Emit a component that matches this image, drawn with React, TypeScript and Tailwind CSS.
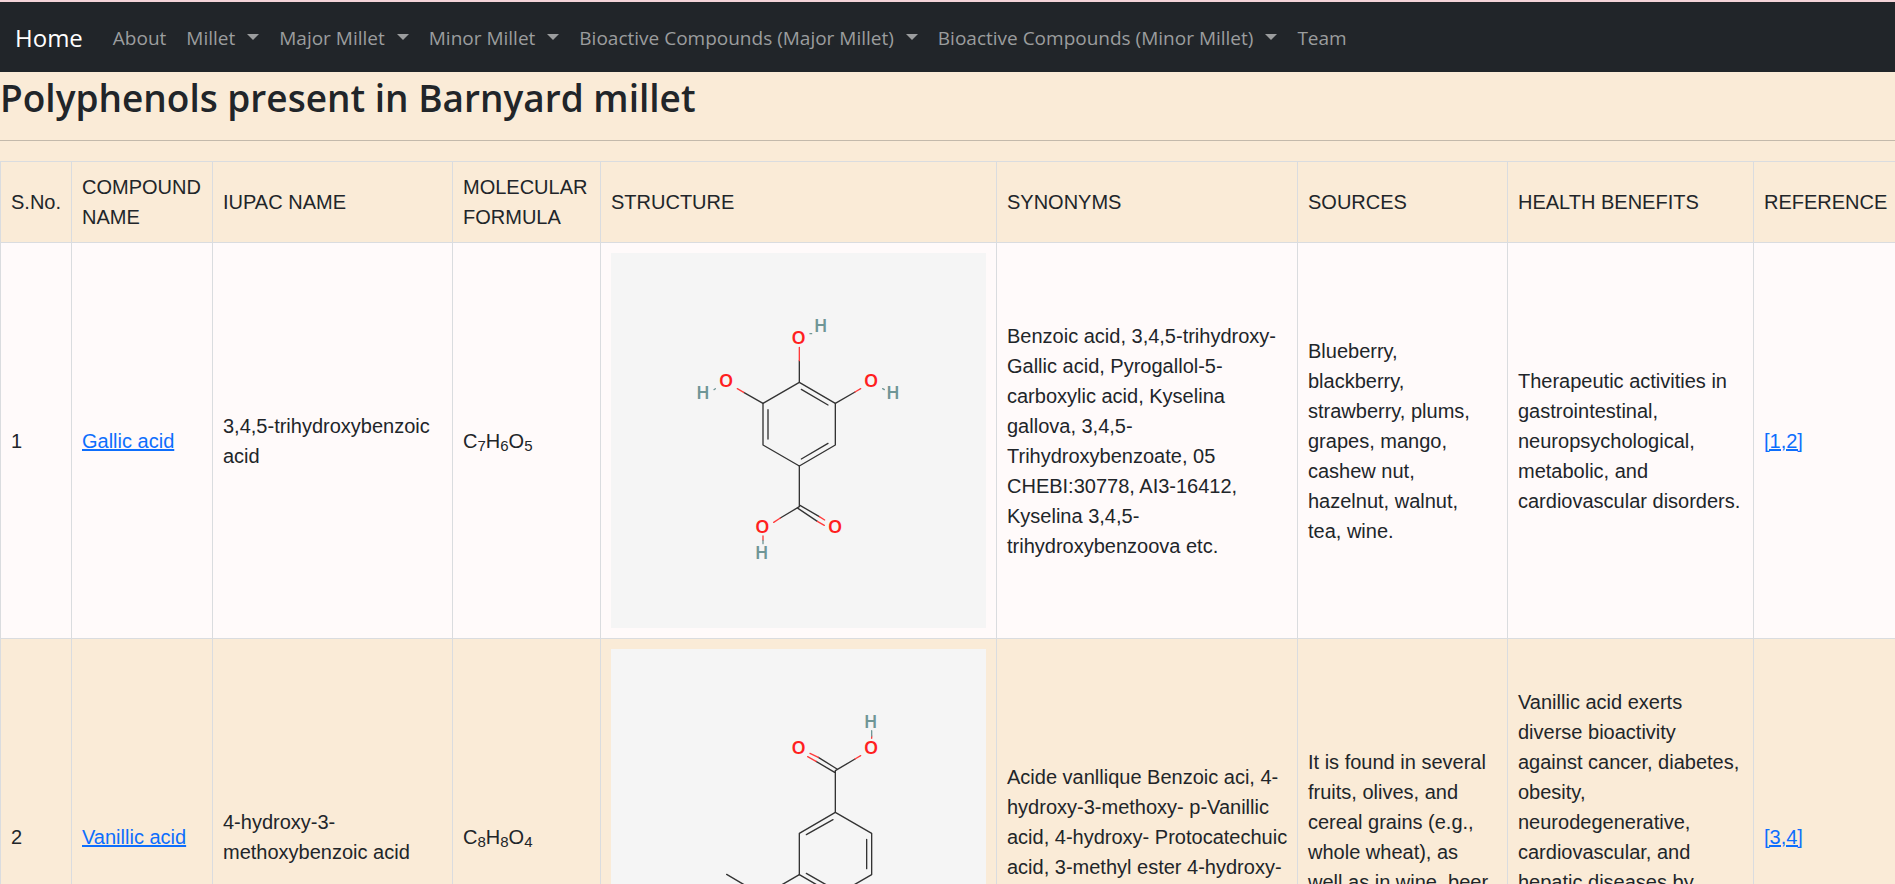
import type { ReactNode } from "react";

const navItems = [
  { label: "About", menu: false },
  { label: "Millet", menu: true },
  { label: "Major Millet", menu: true },
  { label: "Minor Millet", menu: true },
  { label: "Bioactive Compounds (Major Millet)", menu: true },
  { label: "Bioactive Compounds (Minor Millet)", menu: true },
  { label: "Team", menu: false },
];

const CARBON = "#333333";
const OXYGEN = "#ff3b3b";
const HYDROGEN = "#6f9696";

function Bond({ d, color = CARBON }: { d: string; color?: string }) {
  return <path d={d} fill="none" stroke={color} strokeWidth={4} strokeLinecap="round" strokeLinejoin="round" />;
}

function Atom({ x, y, symbol }: { x: number; y: number; symbol: "O" | "H" }) {
  return (
    <text
      x={x}
      y={y}
      textAnchor="middle"
      fontSize={symbol === "O" ? 54 : 53}
      fontWeight={600}
      fill={symbol === "O" ? "#ff1f1f" : HYDROGEN}
      className="font-['Noto_Sans',sans-serif]"
    >
      {symbol}
    </text>
  );
}

function GallicAcid() {
  return (
    <svg viewBox="33 39 1125 1125" role="img" aria-label="Gallic acid structure" className="block size-[375px] bg-[#f5f5f5]">
      <Bond d="M598 427 L706 490 V615 L598 678 L489 615 V490 Z" />
      <Bond d="M604 448 L684 495 M684 610 L604 657 M504 509 V597" />
      <Bond d="M598 427 V362 M489 490 L431 457 M706 490 L765 456" />
      <Bond d="M598 678 V800 L541 834 M600 796 L658 830 M594 805 L652 844" />
      <Bond color={OXYGEN} d="M598 362 V322 M431 457 L412 446 M765 456 L782 446" />
      <Bond color={OXYGEN} d="M541 834 L521 847 M658 830 L674 840 M652 844 L673 856 M489 888 V901" />
      <Bond color={HYDROGEN} d="M489 901 V911 M630 281 H635 M342 449 L346 446 M848 446 L853 449" />
      <Atom x={596} y={313} symbol="O" />
      <Atom x={662} y={276} symbol="H" />
      <Atom x={378} y={440} symbol="O" />
      <Atom x={309} y={478} symbol="H" />
      <Atom x={813} y={440} symbol="O" />
      <Atom x={879} y={478} symbol="H" />
      <Atom x={487} y={879} symbol="O" />
      <Atom x={485} y={958} symbol="H" />
      <Atom x={705} y={879} symbol="O" />
    </svg>
  );
}

function VanillicAcid() {
  return (
    <svg viewBox="33 57 1125 1125" role="img" aria-label="Vanillic acid structure" className="block size-[375px] bg-[#f5f5f5]">
      <Bond d="M706 547 L815 610 V734 L706 797 L598 734 V610 Z" />
      <Bond d="M699 569 L619 614 M800 628 V716 M619 730 L699 776" />
      <Bond d="M706 547 V422 L765 387 M711 417 L655 382 M704 427 L648 394" />
      <Bond d="M598 734 L541 767 M380 733 L437 767 M706 797 V862" />
      <Bond color={OXYGEN} d="M765 387 L782 377 M655 382 L630 370 M648 394 L623 380 M815 325 V318" />
      <Bond color={OXYGEN} d="M541 767 L522 778 M437 767 L456 778 M706 862 V900" />
      <Bond color={HYDROGEN} d="M815 318 V302 M670 940 L674 938" />
      <Atom x={812} y={293} symbol="H" />
      <Atom x={813} y={372} symbol="O" />
      <Atom x={596} y={372} symbol="O" />
      <Atom x={487} y={816} symbol="O" />
      <Atom x={705} y={941} symbol="O" />
      <Atom x={640} y={980} symbol="H" />
    </svg>
  );
}

type Compound = {
  name: string;
  iupac: string;
  formula: [string, number][];
  structure: ReactNode;
  synonyms: string;
  sources: string;
  benefits: string;
  reference: string;
};

const compounds: Compound[] = [
  {
    name: "Gallic acid",
    iupac: "3,4,5-trihydroxybenzoic acid",
    formula: [["C", 7], ["H", 6], ["O", 5]],
    structure: <GallicAcid />,
    synonyms:
      "Benzoic acid, 3,4,5-trihydroxy- Gallic acid, Pyrogallol-5-carboxylic acid, Kyselina gallova, 3,4,5-Trihydroxybenzoate, 05 CHEBI:30778, AI3-16412, Kyselina 3,4,5-trihydroxybenzoova etc.",
    sources: "Blueberry, blackberry, strawberry, plums, grapes, mango, cashew nut, hazelnut, walnut, tea,\u00a0wine.",
    benefits: "Therapeutic activities in gastrointestinal, neuropsychological, metabolic, and cardiovascular disorders.",
    reference: "[1,2]",
  },
  {
    name: "Vanillic acid",
    iupac: "4-hydroxy-3-methoxybenzoic acid",
    formula: [["C", 8], ["H", 8], ["O", 4]],
    structure: <VanillicAcid />,
    synonyms:
      "Acide vanllique Benzoic aci, 4-hydroxy-3-methoxy- p-Vanillic acid, 4-hydroxy- Protocatechuic acid, 3-methyl ester 4-hydroxy-m-anisic acid etc.",
    sources:
      "It is found in several fruits, olives, and cereal grains (e.g., whole wheat), as well\u00a0as\u00a0in wine, beer and cider.",
    benefits:
      "Vanillic acid exerts diverse bioactivity against cancer, diabetes, obesity, neurodegenerative, cardiovascular, and hepatic diseases by inhibiting the associated cell signaling and molecular pathways.",
    reference: "[3,4]",
  },
];

const headings = [
  "S.No.",
  "COMPOUND NAME",
  "IUPAC NAME",
  "MOLECULAR FORMULA",
  "STRUCTURE",
  "SYNONYMS",
  "SOURCES",
  "HEALTH BENEFITS",
  "REFERENCE",
];

const cell = "border border-[#dadcdf] py-[10px] pr-2 pl-[10px] text-left align-middle font-normal last:border-r-0";
const link = "text-[#0d6efd] underline";

function NavBar() {
  return (
    <nav className="flex h-[70px] items-center bg-[#212529] px-[15px] pt-[2px] font-['Open_Sans','Noto_Sans',sans-serif] text-[19px] whitespace-nowrap text-[#9b9d9e]">
      <a href="#home" className="mr-5 text-2xl text-white">
        Home
      </a>
      <ul className="flex items-center">
        {navItems.map((item) => (
          <li key={item.label}>
            {item.menu ? (
              <button type="button" className="flex items-center gap-3 px-[10px]">
                {item.label}
                <svg viewBox="0 0 12 6" className="mb-[2px] h-[6px] w-3" aria-hidden="true">
                  <path d="M0 0H12L6 6Z" fill="currentColor" />
                </svg>
              </button>
            ) : (
              <a href={"#" + item.label.toLowerCase()} className="px-[10px]">
                {item.label}
              </a>
            )}
          </li>
        ))}
      </ul>
    </nav>
  );
}

export default function App() {
  return (
    <div className="min-h-screen overflow-x-hidden border-t-2 border-[#f3d3d8] bg-[#faebd7] text-[#212529]">
      <NavBar />
      <h1 className="font-['Open_Sans','Noto_Sans',sans-serif] text-[37px] leading-[52px] font-semibold">
        Polyphenols present in Barnyard millet
      </h1>
      <hr className="mt-4 mb-5 border-t border-[#212529]/25" />
      <table className="w-full table-fixed border-collapse font-['Liberation_Sans',Arial,sans-serif] text-xl leading-[30px]">
        <colgroup>
          <col className="w-[71px]" />
          <col className="w-[141px]" />
          <col className="w-[240px]" />
          <col className="w-[148px]" />
          <col className="w-[396px]" />
          <col className="w-[301px]" />
          <col className="w-[210px]" />
          <col className="w-[246px]" />
          <col />
        </colgroup>
        <thead>
          <tr>
            {headings.map((heading) => (
              <th key={heading} scope="col" className={cell}>
                {heading}
              </th>
            ))}
          </tr>
        </thead>
        <tbody>
          {compounds.map((compound, index) => (
            <tr key={compound.name} className="odd:bg-[#fffafa]">
              <td className={cell}>{index + 1}</td>
              <td className={cell}>
                <a href="#compound" className={link}>
                  {compound.name}
                </a>
              </td>
              <td className={cell}>{compound.iupac}</td>
              <td className={cell}>
                {compound.formula.map(([element, count]) => (
                  <span key={element}>
                    {element}
                    <sub className="text-[15px]">{count}</sub>
                  </span>
                ))}
              </td>
              <td className={cell}>{compound.structure}</td>
              <td className={cell}>{compound.synonyms}</td>
              <td className={cell}>{compound.sources}</td>
              <td className={cell}>{compound.benefits}</td>
              <td className={cell}>
                <a href="#reference" className={link}>
                  {compound.reference}
                </a>
              </td>
            </tr>
          ))}
        </tbody>
      </table>
    </div>
  );
}
